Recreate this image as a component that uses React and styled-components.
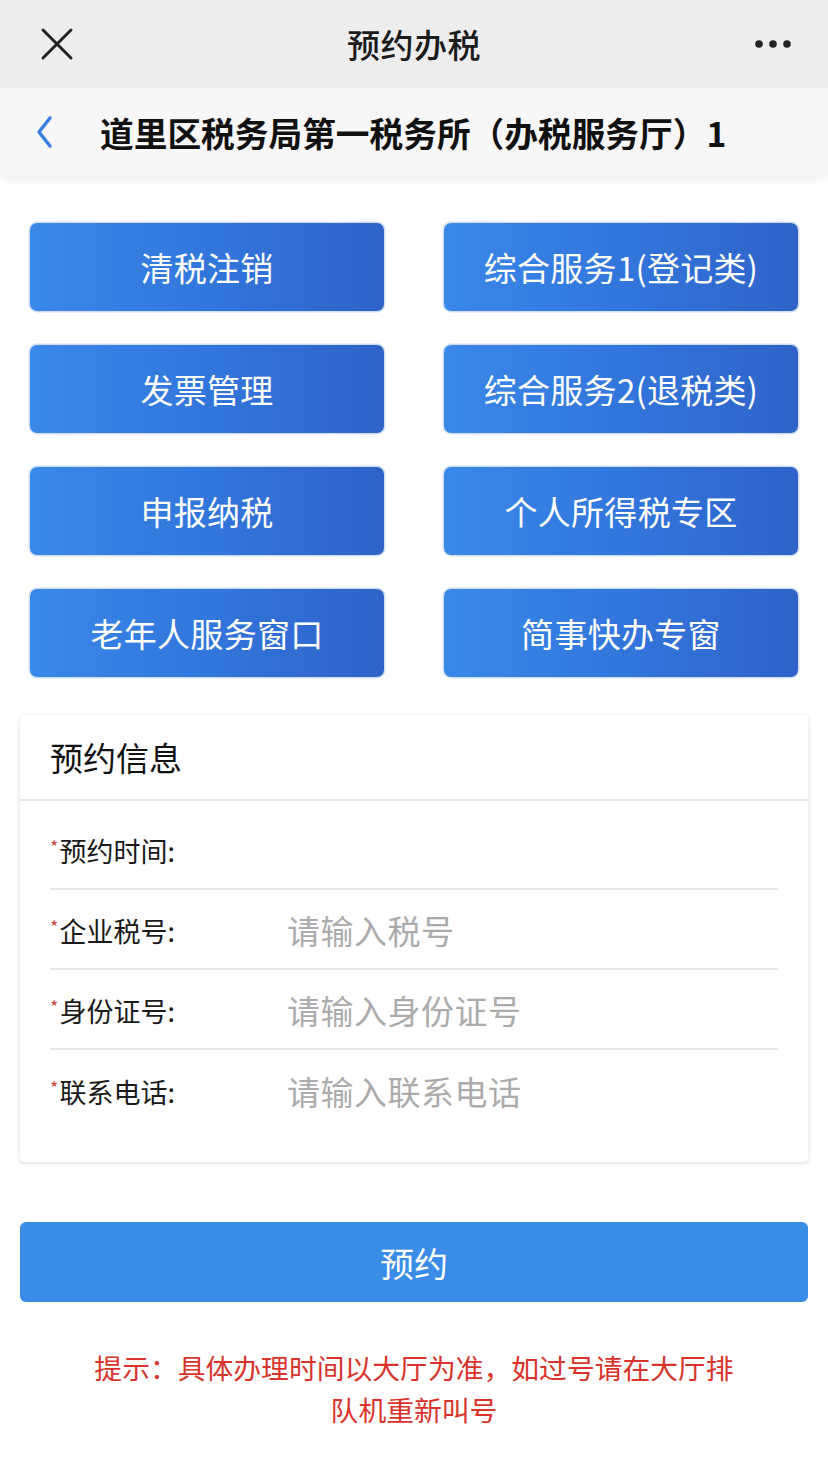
import React from "react";
import styled, { createGlobalStyle } from "styled-components";

const Global = createGlobalStyle`
  html, body { margin: 0; padding: 0; background: #ffffff; }
  body { font-family: "Noto Sans CJK SC", "Noto Sans", sans-serif; }
  * { box-sizing: border-box; }
`;

const Page = styled.div`
  width: 828px;
  min-height: 1463px;
  background: #ffffff;
  display: flex;
  flex-direction: column;
`;

const NavBar = styled.div`
  height: 88px;
  background: #ededed;
  display: grid;
  grid-template-columns: 120px 1fr 120px;
  align-items: center;
`;

const NavTitle = styled.div`
  text-align: center;
  font-size: 33px;
  color: #1b1b1b;
  font-weight: 500;
  letter-spacing: 0.5px;
`;

const IconCell = styled.div`
  display: flex;
  align-items: center;
  justify-content: ${(p) => (p.$end ? "flex-end" : "flex-start")};
  padding: ${(p) => (p.$end ? "0 36px 0 0" : "0 0 0 40px")};
`;

const SubHeader = styled.div`
  height: 88px;
  background: #f7f7f7;
  display: flex;
  align-items: center;
  box-shadow: 0 4px 8px rgba(0, 0, 0, 0.06);
  position: relative;
  z-index: 1;
`;

const BackCell = styled.div`
  width: 100px;
  padding-left: 34px;
  display: flex;
  align-items: center;
`;

const SubTitle = styled.div`
  font-size: 33.7px;
  font-weight: 700;
  color: #111;
  white-space: nowrap;
`;

const ButtonGrid = styled.div`
  display: grid;
  grid-template-columns: 354px 354px;
  column-gap: 60px;
  row-gap: 34px;
  padding: 47px 30px 0 30px;
`;

const ServiceButton = styled.div`
  height: 88px;
  border-radius: 7px;
  background: linear-gradient(90deg, #3a88e8 0%, #3276dc 50%, #2f63c8 100%);
  box-shadow: 0 0 0 1.5px #cfe0f6;
  color: #ffffff;
  font-size: 33px;
  display: flex;
  align-items: center;
  justify-content: center;
  letter-spacing: 0.3px;
`;

const Card = styled.div`
  margin: 38px 20px 0 20px;
  background: #fff;
  border-radius: 4px;
  box-shadow: 0 1px 4px rgba(0, 0, 0, 0.16);
  padding-bottom: 32px;
`;

const CardHeader = styled.div`
  height: 86px;
  padding-left: 30px;
  display: flex;
  align-items: center;
  font-size: 33px;
  color: #111;
  border-bottom: 2px solid #e4e4e4;
`;

const Form = styled.div`
  padding: 9px 30px 0 30px;
`;

const Row = styled.div`
  height: 80px;
  display: flex;
  align-items: center;
  border-bottom: ${(p) => (p.$last ? "none" : "2px solid #e6e6e6")};
  padding-top: 2px;
`;

const Label = styled.div`
  width: 237px;
  font-size: 27px;
  color: #1a1a1a;
  display: flex;
  align-items: center;
`;

const Star = styled.span`
  color: #d0473f;
  font-size: 18px;
  margin-right: 1px;
  align-self: flex-start;
  margin-top: 2px;
`;

const Placeholder = styled.div`
  font-size: 33px;
  color: #ababab;
  letter-spacing: 0.5px;
`;

const Submit = styled.div`
  margin: 60px 20px 0 20px;
  height: 80px;
  border-radius: 6px;
  background: #3a8de6;
  color: #fff;
  font-size: 34px;
  display: flex;
  align-items: center;
  justify-content: center;
`;

const Tip = styled.div`
  margin: 44px auto 0 auto;
  width: 660px;
  text-align: center;
  color: #d8342c;
  font-size: 27.8px;
  line-height: 42px;
`;

const services = [
  "清税注销",
  "综合服务1(登记类)",
  "发票管理",
  "综合服务2(退税类)",
  "申报纳税",
  "个人所得税专区",
  "老年人服务窗口",
  "简事快办专窗",
];

const fields = [
  { label: "预约时间:", ph: "" },
  { label: "企业税号:", ph: "请输入税号" },
  { label: "身份证号:", ph: "请输入身份证号" },
  { label: "联系电话:", ph: "请输入联系电话" },
];

export default function App() {
  return (
    <Page>
      <Global />
      <NavBar>
        <IconCell>
          <svg width="34" height="34" viewBox="0 0 34 34">
            <path d="M3 3 L31 31 M31 3 L3 31" stroke="#222" strokeWidth="3" strokeLinecap="round" />
          </svg>
        </IconCell>
        <NavTitle>预约办税</NavTitle>
        <IconCell $end>
          <svg width="38" height="10" viewBox="0 0 38 10">
            <circle cx="5" cy="5" r="3.8" fill="#222" />
            <circle cx="19" cy="5" r="3.8" fill="#222" />
            <circle cx="33" cy="5" r="3.8" fill="#222" />
          </svg>
        </IconCell>
      </NavBar>
      <SubHeader>
        <BackCell>
          <svg width="20" height="34" viewBox="0 0 20 34">
            <path d="M16 3 L5 17 L16 31" stroke="#3b7fe0" strokeWidth="3.5" fill="none" strokeLinecap="round" strokeLinejoin="round" />
          </svg>
        </BackCell>
        <SubTitle>道里区税务局第一税务所（办税服务厅）1</SubTitle>
      </SubHeader>
      <ButtonGrid>
        {services.map((s) => (
          <ServiceButton key={s}>{s}</ServiceButton>
        ))}
      </ButtonGrid>
      <Card>
        <CardHeader>预约信息</CardHeader>
        <Form>
          {fields.map((f, i) => (
            <Row key={f.label} $last={i === fields.length - 1}>
              <Label>
                <Star>*</Star>
                {f.label}
              </Label>
              <Placeholder>{f.ph}</Placeholder>
            </Row>
          ))}
        </Form>
      </Card>
      <Submit>预约</Submit>
      <Tip>提示：具体办理时间以大厅为准，如过号请在大厅排队机重新叫号</Tip>
    </Page>
  );
}
